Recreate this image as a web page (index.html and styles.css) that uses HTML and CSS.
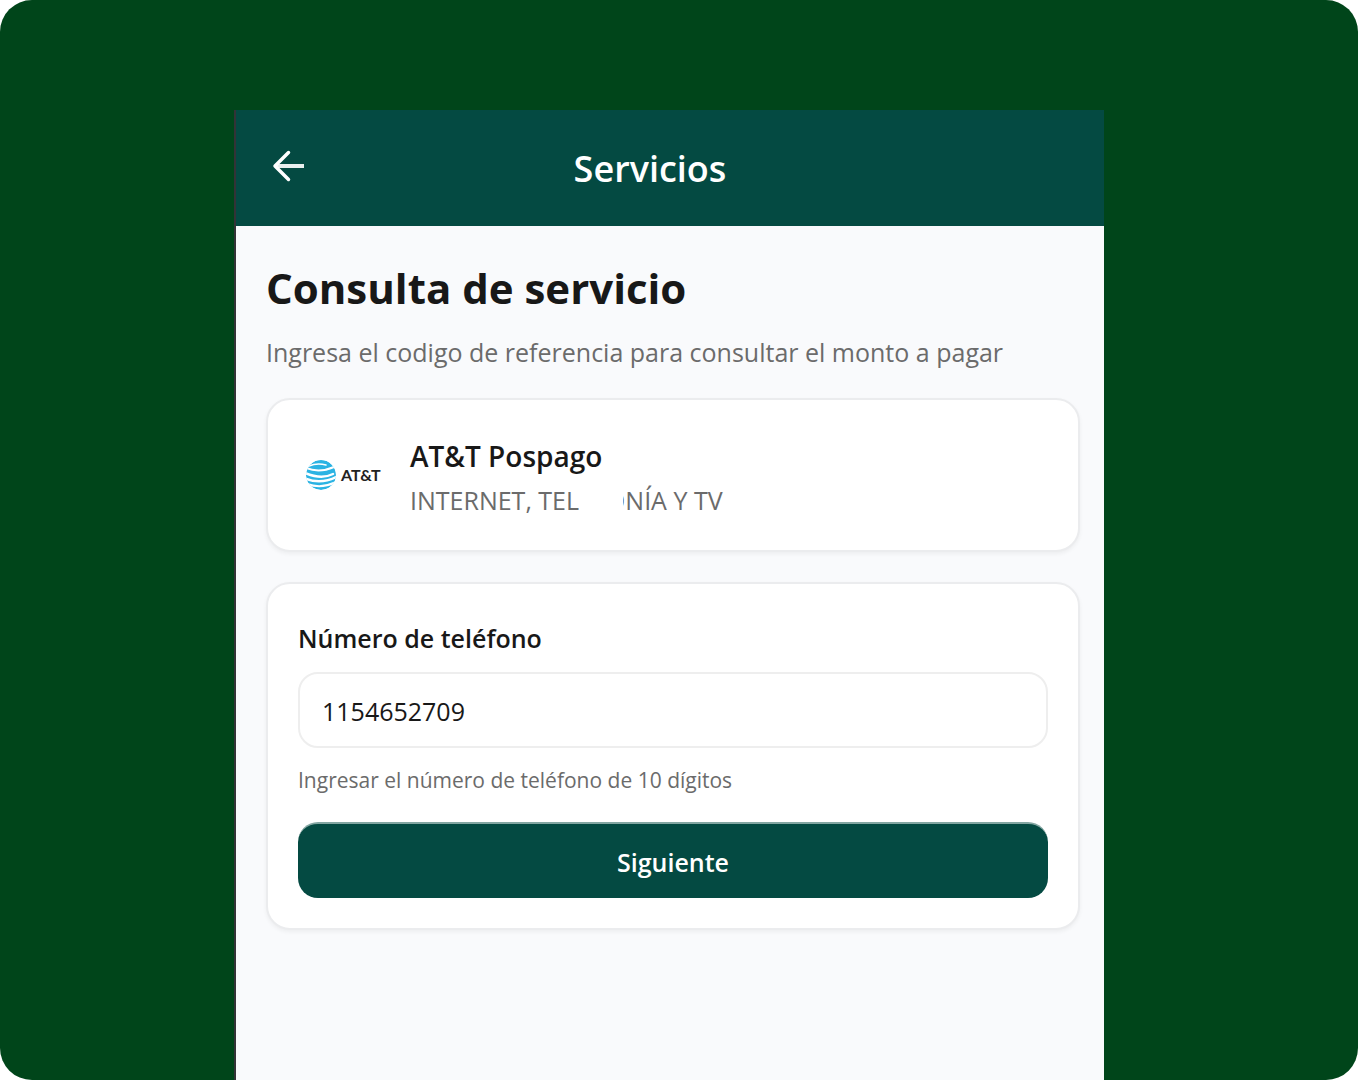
FILE: index.html
```html
<!DOCTYPE html>
<html lang="es">
<head>
    <meta charset="UTF-8">
    <meta name="viewport" content="width=device-width, initial-scale=1.0">
    <title>Servicios</title>
    <link rel="stylesheet" href="styles.css">
</head>
<body>
    <div class="stage">
        <div class="phone">
            <header class="topbar">
                <a href="#" class="back" aria-label="Volver">
                    <svg width="34" height="34" viewBox="0 0 34 34" fill="none" stroke="#fff" stroke-width="4" stroke-linecap="round" stroke-linejoin="round">
                        <path d="M32 17H4" stroke="#e9f0ef" stroke-linecap="butt"/>
                        <path d="M16.500 3.500L3 17L16.500 30.500" stroke-width="3.500"/>
                    </svg>
                </a>
                <div class="title">Servicios</div>
            </header>

            <main class="content">
                <h1>Consulta de servicio</h1>
                <p class="intro">Ingresa el codigo de referencia para consultar el monto a pagar</p>

                <section class="card service">
                    <svg class="logo" width="78" height="34" viewBox="0 0 78 34" role="img" aria-label="AT&amp;T">
                        <defs>
                            <clipPath id="globe"><circle cx="17" cy="17" r="15"/></clipPath>
                        </defs>
                        <g clip-path="url(#globe)">
                            <circle cx="17" cy="17" r="15" fill="#2bb3e3"/>
                            <g fill="none" stroke="#fff" stroke-linecap="round">
                                <path d="M5 8Q13 4.500 22 7" stroke-width="1.500"/>
                                <path d="M0 9Q14 16 30 9" stroke-width="2"/>
                                <path d="M0 14.500Q17 22 29 16" stroke-width="2.500"/>
                                <path d="M0 20Q17 27.500 34 18" stroke-width="2.500"/>
                                <path d="M3 26Q17 31 31 24.500" stroke-width="2"/>
                            </g>
                        </g>
                        <text x="37" y="23" class="logo-text">AT&amp;T</text>
                    </svg>
                    <div class="service-info">
                        <h2>AT&amp;T Pospago</h2>
                        <p>INTERNET, TEL<span class="covered">EFO</span>NÍA Y TV</p>
                    </div>
                </section>

                <form class="card form">
                    <label for="phone">Número de teléfono</label>
                    <input type="text" id="phone" inputmode="numeric" maxlength="10" value="1154652709" aria-describedby="phone-help">
                    <p class="help" id="phone-help">Ingresar el número de teléfono de 10 dígitos</p>
                    <button type="button" class="button">Siguiente</button>
                </form>
            </main>
        </div>
    </div>
</body>
</html>
```

FILE: styles.css
```css
* {
    box-sizing: border-box;
}
body {
    margin: 0;
    background-color: #fff;
    color: #181818;
    font-family: 'Segoe UI', 'Open Sans', 'Noto Sans', sans-serif;
}
h1, h2, p {
    margin: 0;
}
.stage {
    display: flex;
    min-height: 100vh;
    padding: 110px 254px 0 234px;
    background-color: #00451a;
    border-radius: 32px;
}
.phone {
    flex: 1;
    background-color: #f9fafc;
    border-left: 2px solid #333336;
}
.topbar {
    display: flex;
    align-items: center;
    height: 116px;
    padding: 0 72px 4px 36px;
    background-color: #044a42;
}
.back {
    display: flex;
}
.title {
    flex: 1;
    padding: 6px 38px 0 0;
    color: #fff;
    font-size: 36px;
    font-weight: 600;
    line-height: 48px;
    text-align: center;
}
.content {
    padding: 32px 24px 32px 30px;
}
h1 {
    font-size: 42px;
    font-weight: 700;
    line-height: 60px;
}
.intro {
    margin-top: 16px;
    color: #6b6b6b;
    font-size: 25px;
    line-height: 36px;
}
.card {
    background-color: #fff;
    border: 2px solid #ebecee;
    border-radius: 24px;
    box-shadow: 0 2px 4px rgba(0, 0, 0, 0.05);
}
.service {
    display: flex;
    align-items: center;
    gap: 28px;
    margin-top: 28px;
    padding: 28px 36px;
}
.logo-text {
    fill: #222;
    font-family: Lato, sans-serif;
    font-size: 16px;
    font-weight: 700;
}
.service-info {
    padding-top: 6px;
}
h2 {
    font-size: 28px;
    font-weight: 600;
    line-height: 44px;
}
.service-info p {
    color: #6b6b6b;
    font-size: 25px;
    line-height: 44px;
}
.covered {
    position: relative;
}
.covered::after {
    content: "";
    position: absolute;
    inset: 0 2px 0 0;
    background-color: #fff;
}
.form {
    display: flex;
    flex-direction: column;
    margin-top: 30px;
    padding: 36px 30px 30px;
}
label {
    font-size: 25px;
    font-weight: 600;
    line-height: 36px;
}
input {
    width: 100%;
    height: 76px;
    margin-top: 16px;
    padding: 2px 22px 0;
    background-color: #fff;
    border: 2px solid #eee;
    border-radius: 20px;
    color: #181818;
    font-family: inherit;
    font-size: 25px;
}
.help {
    margin-top: 16px;
    color: #6b6b6b;
    font-size: 21px;
    line-height: 32px;
}
.button {
    height: 76px;
    margin-top: 26px;
    padding: 2px 24px 0;
    background-color: #044a42;
    border: 0;
    border-top: 2px solid #83a6a2;
    border-radius: 20px;
    color: #fff;
    font-family: inherit;
    font-size: 25px;
    font-weight: 600;
    cursor: pointer;
}
```
